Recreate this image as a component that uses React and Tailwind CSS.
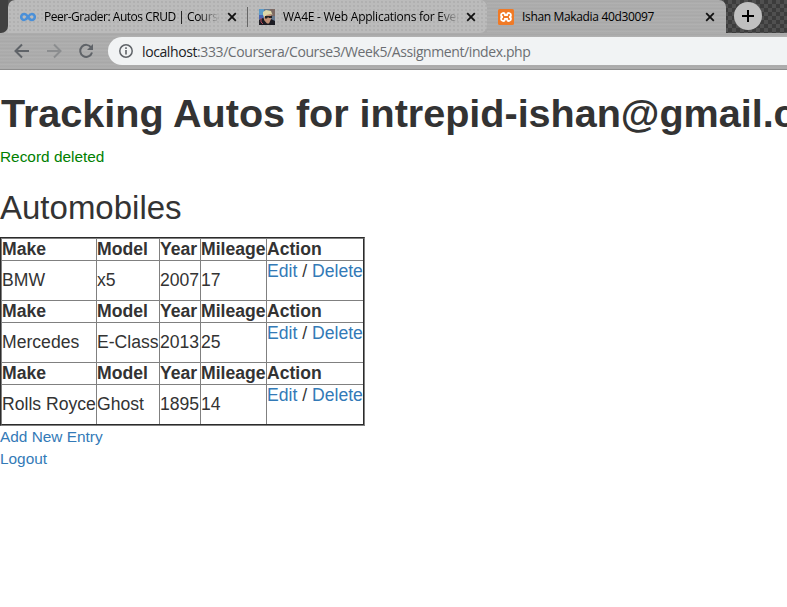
import React from "react";

const autos = [
  ["BMW", "x5", "2007", "17"],
  ["Mercedes", "E-Class", "2013", "25"],
  ["Rolls Royce", "Ghost", "1895", "14"],
];
const heads = ["Make", "Model", "Year", "Mileage", "Action"];

const metal =
  "bg-[#ababab] bg-[image:repeating-linear-gradient(180deg,#aeaeae_0px,#a6a6a6_2px,#b3b3b3_3px,#a9a9a9_5px,#b0b0b0_7px)]";
const dots =
  "bg-[#bbbbbb] bg-[image:radial-gradient(#adadad_0.6px,transparent_1px)] bg-[length:4px_4px]";

function Close() {
  return (
    <svg width="10" height="10" viewBox="0 0 10 10" className="shrink-0">
      <path d="M1.2 1.2 8.8 8.8M8.8 1.2 1.2 8.8" stroke="#111" strokeWidth="1.8" />
    </svg>
  );
}

function Coursera() {
  return (
    <svg width="16" height="16" viewBox="0 0 16 16" className="shrink-0">
      <path
        d="M8 8C6.7 5.900 5.700 5 4.200 5a3 3 0 0 0 0 6C5.700 11 6.700 10 8 8s2.300-3 3.800-3a3 3 0 0 1 0 6C10.300 11 9.300 10.100 8 8"
        fill="none"
        stroke="#4a90d9"
        strokeWidth="2.500"
      />
    </svg>
  );
}

function Portrait() {
  return (
    <svg width="16" height="16" viewBox="0 0 16 16" className="shrink-0">
      <rect width="16" height="16" fill="#67798f" />
      <path d="M0 0h5v8H0z" fill="#5c9cc9" />
      <path d="M0 6h4v4H0z" fill="#4b62b0" />
      <path d="M11 0h5v7h-5z" fill="#7d6a64" />
      <path d="M0 16v-5l4-2 5 4 3-3 4 2v4z" fill="#1b1b22" />
      <path d="M5 5h7v5l-2 4.500H8L5 11z" fill="#c08f76" />
      <path d="M4 6V3l3-2 5 1 1.500 4-2-1-4 1-2 2z" fill="#ddd6a8" />
      <path d="M6 7h7v2h-3L9 8 8 9.500H6z" fill="#222" />
      <path d="M2 9v4l2 2" stroke="#b44a5a" fill="none" />
    </svg>
  );
}

function Xampp() {
  return (
    <svg width="16" height="16" viewBox="0 0 16 16" className="shrink-0">
      <rect width="16" height="16" rx="1.500" fill="#f07a26" />
      <path
        d="M5 8A2 2 0 1 1 7 5.500V6.200H9V5.500A2 2 0 1 1 11 8 2 2 0 1 1 9 10.500V9.800H7V10.500A2 2 0 1 1 5 8"
        fill="none"
        stroke="#fff"
        strokeWidth="1.800"
      />
    </svg>
  );
}

export default function App() {
  return (
    <div className="h-[607px] w-[787px] overflow-hidden bg-white font-['Liberation_Sans',Arial,sans-serif] text-[#333]">
      <header className="font-['Open_Sans','Noto_Sans',sans-serif] text-black">
        <div className="flex h-[33px] bg-[#454545] bg-[image:repeating-conic-gradient(#3c3c3c_0_25%,#505050_0_50%)] bg-[length:8px_8px]">
          <div className="w-2 shrink-0 overflow-hidden bg-[#b4b4b4]">
            <div className="h-[33px] rounded-br-[7px] bg-[#414141]" />
          </div>
          <div className={`flex h-[33px] w-[239px] shrink-0 items-center rounded-tl-[7px] pl-3 ${dots}`}>
            <Coursera />
            <div className="ml-2 w-[176px] overflow-hidden whitespace-nowrap text-[12px] tracking-[-0.480px] [mask-image:linear-gradient(90deg,#000_88%,transparent)]">
              Peer-Grader: Autos CRUD | Coursera
            </div>
            <div className="ml-[7px] flex"><Close /></div>
          </div>
          <div className="flex w-px shrink-0 items-center bg-[#b9b9b9]">
            <div className="h-5 w-px bg-[#666]" />
          </div>
          <div className="flex w-[239px] shrink-0 bg-[#aaa]">
            <div className={`flex h-[33px] w-full items-center rounded-r-[7px] pl-[11px] ${dots}`}>
              <Portrait />
              <div className="ml-2 w-[176px] overflow-hidden whitespace-nowrap text-[12px] tracking-[-0.250px] [mask-image:linear-gradient(90deg,#000_88%,transparent)]">
                WA4E - Web Applications for Everybody
              </div>
              <div className="ml-[7px] flex"><Close /></div>
            </div>
          </div>
          <div className={`flex w-[239px] shrink-0 items-center rounded-tr-[7px] pl-[11px] ${metal}`}>
            <Xampp />
            <div className="ml-2 w-[176px] whitespace-nowrap text-[12px] tracking-[-0.340px]">
              Ishan Makadia 40d30097
            </div>
            <div className="ml-[7px] flex"><Close /></div>
          </div>
          <div className="flex min-w-0 flex-1 items-start pl-2 pt-[2px]">
            <div className="flex h-7 w-7 items-center justify-center rounded-full bg-[#c0c0c0]">
              <svg width="12" height="12" viewBox="0 0 12 12">
                <path d="M6 0v12M0 6h12" stroke="#000" strokeWidth="2" />
              </svg>
            </div>
          </div>
        </div>
        <div className={`flex h-[37px] items-start border-b border-[#8e8e8e] pt-1 ${metal}`}>
          <div className="flex h-7 w-[108px] items-center pl-[14px]">
            <svg width="16" height="16" viewBox="0 0 16 16" fill="none" stroke="#5f6368" strokeWidth="2">
              <path d="M15 8H2M8 1.500 1.500 8 8 14.500" />
            </svg>
            <svg width="16" height="16" viewBox="0 0 16 16" fill="none" stroke="#8b8d8f" strokeWidth="2" className="ml-4">
              <path d="M1 8h13M8 1.500 14.500 8 8 14.500" />
            </svg>
            <svg width="16" height="16" viewBox="0 0 16 16" className="ml-4">
              <path d="M13.200 4.500A6 6 0 1 0 14 9.500" fill="none" stroke="#5f6368" strokeWidth="2" />
              <path d="M15 1v6H9z" fill="#5f6368" />
            </svg>
          </div>
          <div className="flex h-7 flex-1 items-center rounded-l-full bg-[#f1f3f4] pl-[11px]">
            <svg width="14" height="14" viewBox="0 0 14 14">
              <circle cx="7" cy="7" r="6.200" fill="none" stroke="#5f6368" strokeWidth="1.500" />
              <path d="M7 6v4.500M7 3.300v1.600" stroke="#5f6368" strokeWidth="1.600" />
            </svg>
            <span className="ml-[9px] whitespace-nowrap text-[14px] tracking-[-0.400px] text-[#6b6e72]">
              <span className="text-[#202124]">localhost</span>:333/Coursera/Course3/Week5/Assignment/index.php
            </span>
          </div>
        </div>
      </header>
      <main>
        <h1 className="mt-[21px] h-11 whitespace-nowrap pl-px text-[39.600px] font-bold leading-[44px] tracking-[-0.030px]">
          Tracking Autos for intrepid-ishan@gmail.com
        </h1>
        <p className="mt-[11px] h-[22px] text-[15.400px] leading-[22px] text-[green]">Record deleted</p>
        <h2 className="mt-[22px] h-9 text-[33px] leading-9">Automobiles</h2>
        <div className="mt-[11px] w-[365px] border border-b-[#808080] border-l-[#2b2b2b] border-r-[#808080] border-t-[#2b2b2b]">
          <div className="border border-b-[#2b2b2b] border-l-[#808080] border-r-[#2b2b2b] border-t-[#808080] text-[17.600px] leading-5">
            {autos.map((row, i) => (
              <div key={row[0]} className={i ? "border-t border-[#808080]" : ""}>
                <div className="grid h-[22px] grid-cols-[94px_63px_41px_66px_97px] border-b border-[#808080] font-bold">
                  {heads.map((h, j) => (
                    <div key={h} className={j ? "whitespace-nowrap border-l border-[#808080]" : ""}>{h}</div>
                  ))}
                </div>
                <div className="grid h-[39px] grid-cols-[94px_63px_41px_66px_97px]">
                  {row.map((c, j) => (
                    <div key={j} className={`flex items-center whitespace-nowrap pb-[2px] ${j ? "border-l border-[#808080]" : ""}`}>{c}</div>
                  ))}
                  <div className="whitespace-nowrap border-l border-[#808080]">
                    <a className="text-[#337ab7]">Edit</a> / <a className="text-[#337ab7]">Delete</a>
                  </div>
                </div>
              </div>
            ))}
          </div>
        </div>
        <div className="text-[15.400px] leading-[22px] text-[#337ab7]">
          <div><a>Add New Entry</a></div>
          <div><a>Logout</a></div>
        </div>
      </main>
    </div>
  );
}
